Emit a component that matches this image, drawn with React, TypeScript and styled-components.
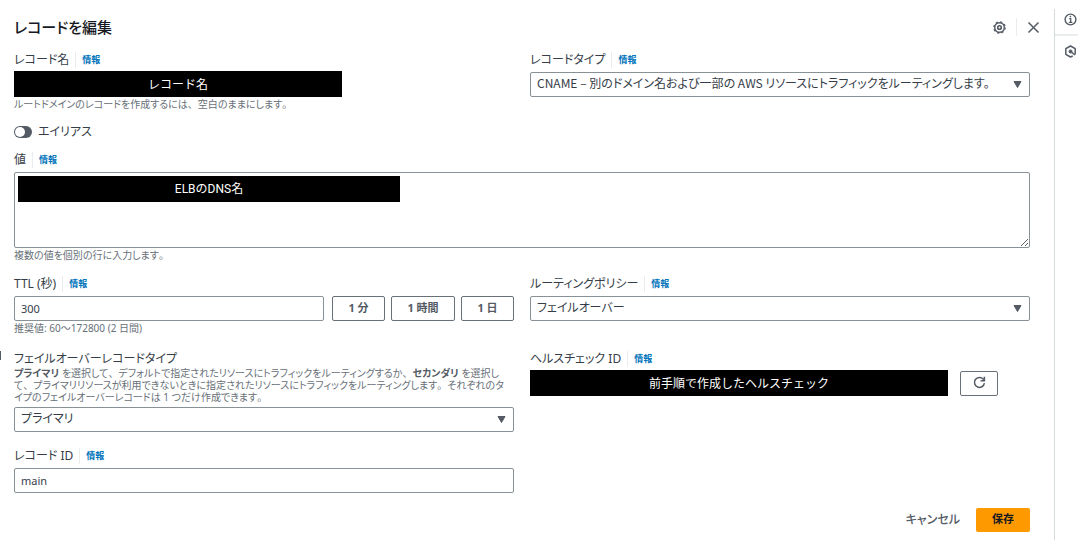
import React, { useState } from 'react';
import styled, { createGlobalStyle } from 'styled-components';

const GlobalStyle = createGlobalStyle`
  *, *::before, *::after { box-sizing: border-box; }
  body {
    margin: 0;
    background: #fff;
    color: #363d47;
    font-family: "Noto Sans", "Noto Sans CJK JP", sans-serif;
    font-feature-settings: "palt";
    font-size: 12px;
    line-height: 16px;
  }
  input, select, textarea, button {
    font: inherit;
    font-feature-settings: inherit;
    color: inherit;
    margin: 0;
  }
`;

const Page = styled.div`
  position: relative;
  display: flex;
  align-items: stretch;
  padding: 9px 0 2px;
`;

const DrawerHandle = styled.span`
  position: absolute;
  left: 0;
  top: 351px;
  width: 1px;
  height: 9px;
  background: #545b64;
`;

const Main = styled.main`
  flex: 1;
  min-width: 0;
  padding: 9px 24px 8px 14px;
`;

const Header = styled.header`
  display: flex;
  align-items: center;
  justify-content: space-between;
  height: 18px;
  margin-bottom: 16px;
`;

const Title = styled.h1`
  margin: 0;
  font-size: 15px;
  line-height: 18px;
  font-weight: 500;
  color: #16191f;
`;

const HeaderTools = styled.div`
  display: flex;
  align-items: center;
  margin-right: -10px;
`;

const IconButton = styled.button`
  display: flex;
  padding: 0;
  border: 0;
  background: none;
  color: #545b64;
  cursor: pointer;
`;

const ToolDivider = styled.span`
  width: 1px;
  height: 18px;
  margin: 0 10px;
  background: #eaeded;
`;

const Form = styled.form`
  display: flex;
  flex-direction: column;
  gap: 16px;
`;

const Group = styled.div`
  display: flex;
  flex-direction: column;
  gap: 14px;
`;

const Columns = styled.div`
  display: grid;
  grid-template-columns: minmax(0, 1fr) minmax(0, 1fr);
  column-gap: 16px;
  align-items: start;
`;

const FieldBox = styled.div`
  display: flex;
  flex-direction: column;
  min-width: 0;
`;

const LabelRow = styled.div`
  display: flex;
  align-items: center;
  height: 16px;
`;

const InfoLink = styled.a`
  margin-left: 6px;
  padding-left: 6px;
  border-left: 1px solid #eaeded;
  font-size: 9px;
  line-height: 16px;
  font-weight: 700;
  color: #0073bb;
  text-decoration: none;
`;

const Hint = styled.p`
  margin: 0;
  font-size: 10px;
  line-height: 14px;
  color: #687078;
`;

const Description = styled.p`
  margin: 0;
  font-size: 10px;
  line-height: 12px;
  color: #687078;

  b { color: #545b64; }
`;

const DescriptionLine = styled.span`
  display: block;
  white-space: nowrap;
`;

const FullWidthMark = styled.span`
  font-feature-settings: normal;
`;

const ControlRow = styled.div`
  display: flex;
  gap: 6px;
  margin-top: 4px;
`;

const TextInput = styled.input`
  flex: 1;
  min-width: 0;
  height: 25px;
  padding: 0 6px;
  border: 1px solid #879196;
  border-radius: 2px;
  background: #fff;
  font-size: 11px;
  outline: none;
`;

const MaskedInput = styled.input<{ $width: number }>`
  width: ${({ $width }) => $width}px;
  max-width: 100%;
  height: 26px;
  margin-top: -1px;
  padding: 0 0 2px;
  border: 0;
  background: #000;
  color: #fff;
  text-align: center;
  font-family: Roboto, "Noto Sans CJK JP", sans-serif;
  font-feature-settings: normal;
  outline: none;
`;

const TextAreaWrap = styled.div`
  position: relative;
  display: flex;
  margin-top: 4px;
`;

const TextArea = styled.textarea`
  width: 100%;
  height: 76px;
  padding: 4px 6px;
  border: 1px solid #879196;
  border-radius: 2px;
  background: #fff;
  resize: vertical;
  outline: none;
`;

const ValueMask = styled.div`
  position: absolute;
  left: 4px;
  top: 4px;
  width: 382px;
  height: 26px;
  line-height: 26px;
  background: #000;
  color: #fff;
  text-align: center;
  font-family: Roboto, "Noto Sans CJK JP", sans-serif;
  font-feature-settings: normal;
`;

const SelectWrap = styled.div`
  position: relative;
  display: flex;
  margin-top: 4px;
  color: #545b64;

  svg {
    position: absolute;
    right: 8px;
    top: 8px;
    pointer-events: none;
  }
`;

const SelectInput = styled.select`
  width: 100%;
  height: 25px;
  padding: 0 24px 3px 6px;
  border: 1px solid #879196;
  border-radius: 2px;
  background: #fff;
  color: #363d47;
  font-family: "Noto Sans CJK JP", sans-serif;
  appearance: none;
  outline: none;
`;

const Button = styled.button<{ $width: number }>`
  display: flex;
  align-items: center;
  justify-content: center;
  width: ${({ $width }) => $width}px;
  height: 25px;
  padding: 0 0 2px;
  border: 1px solid #687078;
  border-radius: 2px;
  background: #fff;
  color: #545b64;
  font-size: 11px;
  font-weight: 700;
  cursor: pointer;
`;

const PresetGroup = styled.div`
  display: flex;
  gap: 6px;
  margin-left: 2px;
`;

const RefreshSlot = styled.div`
  margin-left: 6px;
`;

const ToggleRow = styled.label`
  display: flex;
  align-items: center;
  gap: 6px;
  height: 13px;
`;

const Toggle = styled.input`
  appearance: none;
  position: relative;
  width: 18px;
  height: 12px;
  border-radius: 6px;
  background: #545b64;

  &::after {
    content: "";
    position: absolute;
    left: 1px;
    top: 1px;
    width: 10px;
    height: 10px;
    border-radius: 50%;
    background: #fff;
  }
  &:checked { background: #0073bb; }
  &:checked::after { left: 7px; }
`;

const Footer = styled.footer`
  display: flex;
  justify-content: flex-end;
  align-items: center;
  gap: 16px;
  margin-top: -1px;
`;

const CancelButton = styled.button`
  padding: 0;
  border: 0;
  background: none;
  color: #545b64;
  font-weight: 500;
  cursor: pointer;
`;

const SaveButton = styled.button`
  width: 54px;
  height: 24px;
  padding: 0 0 2px;
  border: 0;
  border-radius: 2px;
  background: #ff9900;
  color: #16191f;
  font-size: 11px;
  font-weight: 700;
  cursor: pointer;
`;

const Rail = styled.aside`
  width: 24px;
  margin-right: 10px;
  border-left: 1px solid #d5dbdb;
`;

const RailItem = styled.div`
  display: flex;
  justify-content: flex-end;
  padding: 4px 1px 8px 0;

  & + & {
    padding-top: 9px;
    border-top: 2px solid #eaeded;
  }
`;

const InfoIcon = () => (
  <svg width="13" height="13" viewBox="0 0 13 13" fill="none" stroke="currentColor">
    <circle cx="6.5" cy="6.5" r="5.4" strokeWidth="1.4" />
    <path d="M5.2 5.6h1.5v3.6M4.9 9.3h3.4" strokeWidth="1.3" />
    <circle cx="6.4" cy="3.6" r=".5" strokeWidth=".8" fill="currentColor" />
  </svg>
);

const HexIcon = () => (
  <svg width="13" height="13" viewBox="0 0 13 13" fill="none" stroke="currentColor">
    <path d="M8.8 10.8 6.5 12 1.8 9.3V3.7L6.5 1l4.7 2.7v5.6" strokeWidth="1.5" strokeLinejoin="round" />
    <circle cx="6.5" cy="6.4" r="1.5" strokeWidth="1" fill="currentColor" />
    <path d="M7.2 7.2 11.2 10" strokeWidth="1.5" />
  </svg>
);

const GearIcon = () => (
  <svg width="13" height="13" viewBox="0 0 13 13" fill="none" stroke="currentColor">
    <circle cx="6.5" cy="6.5" r="4.8" strokeWidth="1.4" />
    <circle cx="6.5" cy="6.5" r="5.7" strokeWidth="1.2" strokeDasharray="2.2 2.277" />
    <circle cx="6.5" cy="6.5" r="1.8" strokeWidth="1.6" />
  </svg>
);

const CloseIcon = () => (
  <svg width="13" height="13" viewBox="0 0 13 13" fill="none" stroke="currentColor" strokeWidth="1.5">
    <path d="M1.5 1.5l10 10M11.5 1.5l-10 10" />
  </svg>
);

const CaretIcon = () => (
  <svg width="9" height="9" viewBox="0 0 9 9" fill="currentColor" stroke="currentColor" strokeLinejoin="round">
    <path d="M1 1.5h7L4.5 7.5z" />
  </svg>
);

const RefreshIcon = () => (
  <svg width="13" height="13" viewBox="0 0 13 13" fill="none" stroke="currentColor" strokeWidth="1.5">
    <path d="M11.4 7.2A5 5 0 1 1 10.2 3.1L11 4" />
    <path d="M11.4.8v3.9H7.6" />
  </svg>
);

// Kana is set proportionally; commas and full stops keep their full width.
const Prose = ({ text }: { text: string }) => (
  <>
    {text.split(/([、。])/).map((part, index) =>
      index % 2 ? <FullWidthMark key={index}>{part}</FullWidthMark> : part,
    )}
  </>
);

type FieldProps = {
  id: string;
  label: string;
  info?: boolean;
  hint?: string;
  children: React.ReactNode;
};

const Field = ({ id, label, info = true, hint, children }: FieldProps) => (
  <FieldBox>
    <LabelRow>
      <label htmlFor={id}>{label}</label>
      {info && <InfoLink href="#info">情報</InfoLink>}
    </LabelRow>
    {children}
    {hint && <Hint><Prose text={hint} /></Hint>}
  </FieldBox>
);

const Select = ({ id, options }: { id: string; options: string[] }) => (
  <SelectWrap>
    <SelectInput id={id}>
      {options.map((option) => (
        <option key={option}>{option}</option>
      ))}
    </SelectInput>
    <CaretIcon />
  </SelectWrap>
);

const ttlPresets = [
  { label: '1 分', seconds: '60', width: 53 },
  { label: '1 時間', seconds: '3600', width: 64 },
  { label: '1 日', seconds: '86400', width: 53 },
];

export default function App() {
  const [ttl, setTtl] = useState('300');

  return (
    <>
      <GlobalStyle />
      <Page>
        <DrawerHandle />
        <Main>
          <Header>
            <Title>レコードを編集</Title>
            <HeaderTools>
              <IconButton type="button" aria-label="設定"><GearIcon /></IconButton>
              <ToolDivider />
              <IconButton type="button" aria-label="閉じる"><CloseIcon /></IconButton>
            </HeaderTools>
          </Header>

          <Form onSubmit={(event) => event.preventDefault()}>
            <Group>
              <Columns>
                <Field id="name" label="レコード名" hint="ルートドメインのレコードを作成するには、空白のままにします。">
                  <ControlRow>
                    <MaskedInput id="name" $width={328} defaultValue="レコード名" />
                  </ControlRow>
                </Field>
                <Field id="type" label="レコードタイプ">
                  <Select id="type" options={['CNAME – 別のドメイン名および一部の AWS リソースにトラフィックをルーティングします。']} />
                </Field>
              </Columns>

              <ToggleRow>
                <Toggle type="checkbox" role="switch" />
                エイリアス
              </ToggleRow>

              <Field id="value" label="値" hint="複数の値を個別の行に入力します。">
                <TextAreaWrap>
                  <TextArea id="value" />
                  <ValueMask>ELBのDNS名</ValueMask>
                </TextAreaWrap>
              </Field>

              <Columns>
                <Field id="ttl" label="TTL (秒)" hint="推奨値: 60～172800 (2 日間)">
                  <ControlRow>
                    <TextInput id="ttl" value={ttl} onChange={(event) => setTtl(event.target.value)} />
                    <PresetGroup>
                      {ttlPresets.map(({ label, seconds, width }) => (
                        <Button key={label} type="button" $width={width} onClick={() => setTtl(seconds)}>
                          {label}
                        </Button>
                      ))}
                    </PresetGroup>
                  </ControlRow>
                </Field>
                <Field id="policy" label="ルーティングポリシー">
                  <Select id="policy" options={['フェイルオーバー']} />
                </Field>
              </Columns>
            </Group>

            <Columns>
              <Field id="failover" label="フェイルオーバーレコードタイプ" info={false}>
                <Description>
                  <DescriptionLine>
                    <b>プライマリ</b>
                    <Prose text=" を選択して、デフォルトで指定されたリソースにトラフィックをルーティングするか、" />
                    <b>セカンダリ</b> を選択し
                  </DescriptionLine>
                  <DescriptionLine>
                    <Prose text="て、プライマリリソースが利用できないときに指定されたリソースにトラフィックをルーティングします。それぞれのタ" />
                  </DescriptionLine>
                  <DescriptionLine>
                    <Prose text="イプのフェイルオーバーレコードは 1 つだけ作成できます。" />
                  </DescriptionLine>
                </Description>
                <Select id="failover" options={['プライマリ', 'セカンダリ']} />
              </Field>
              <Field id="health" label="ヘルスチェック ID">
                <ControlRow>
                  <MaskedInput id="health" $width={418} defaultValue="前手順で作成したヘルスチェック" />
                  <RefreshSlot>
                    <Button type="button" $width={38} aria-label="更新"><RefreshIcon /></Button>
                  </RefreshSlot>
                </ControlRow>
              </Field>
            </Columns>

            <Columns>
              <Field id="record-id" label="レコード ID">
                <ControlRow>
                  <TextInput id="record-id" defaultValue="main" />
                </ControlRow>
              </Field>
            </Columns>

            <Footer>
              <CancelButton type="button">キャンセル</CancelButton>
              <SaveButton type="submit">保存</SaveButton>
            </Footer>
          </Form>
        </Main>
        <Rail>
          <RailItem>
            <IconButton type="button" aria-label="ヘルプ"><InfoIcon /></IconButton>
          </RailItem>
          <RailItem>
            <IconButton type="button" aria-label="リソース"><HexIcon /></IconButton>
          </RailItem>
        </Rail>
      </Page>
    </>
  );
}
